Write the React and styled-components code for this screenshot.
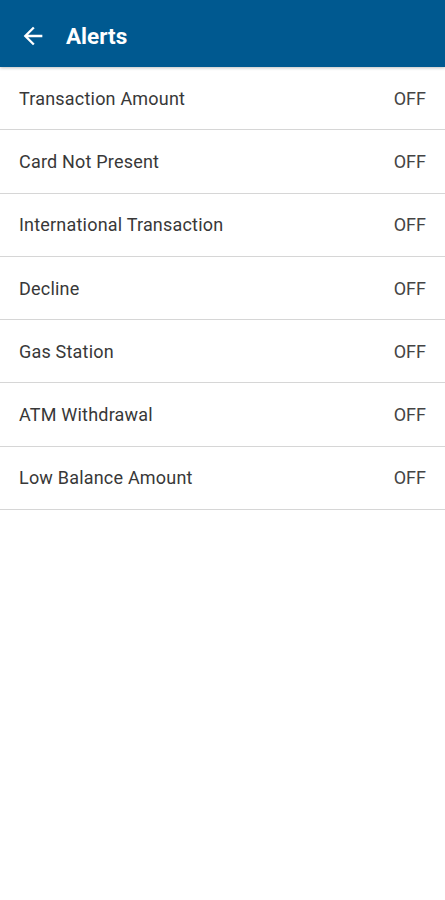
import React from 'react'
import styled, { createGlobalStyle } from 'styled-components'

const GlobalStyle = createGlobalStyle`
  body {
    margin: 0;
    background: #fff;
    font-family: Roboto, "Liberation Sans", sans-serif;
  }
`

const alerts = [
  'Transaction Amount',
  'Card Not Present',
  'International Transaction',
  'Decline',
  'Gas Station',
  'ATM Withdrawal',
  'Low Balance Amount',
]

const App = () => {
  return (
    <Page>
      <GlobalStyle />
      <Toolbar>
        <BackButton aria-label='back'>
          <svg width='28' height='28' viewBox='0 0 24 24'>
            <path d='M20 11H7.83l5.59-5.59L12 4l-8 8 8 8 1.41-1.41L7.83 13H20v-2z' fill='#fff' />
          </svg>
        </BackButton>
        <Title>Alerts</Title>
      </Toolbar>
      <List>
        {alerts.map((name) => (
          <Row key={name}>
            <Label>{name}</Label>
            <Status>OFF</Status>
          </Row>
        ))}
      </List>
    </Page>
  )
}

const Page = styled.div`
  width: 445px;
  min-height: 900px;
  background: #fff;
`

const Toolbar = styled.header`
  height: 67px;
  background: #005990;
  display: flex;
  align-items: center;
  padding: 4px 0 0 19px;
  box-sizing: border-box;
  box-shadow: 0 1px 3px rgba(0, 0, 0, 0.25);
  position: relative;
`

const BackButton = styled.button`
  background: none;
  border: none;
  padding: 0;
  display: flex;
  align-items: center;
  margin-right: 19px;
`

const Title = styled.h1`
  margin: 0;
  color: #fff;
  font-size: 22.5px;
  font-weight: 700;
`

const List = styled.ul`
  list-style: none;
  margin: 0;
  padding: 0;
`

const Row = styled.li`
  display: flex;
  align-items: center;
  justify-content: space-between;
  height: 63.3px;
  padding: 0 19px;
  box-sizing: border-box;
  border-bottom: 1.5px solid #d6d6d6;
`

const Label = styled.span`
  font-size: 18px;
  letter-spacing: 0.2px;
  color: #383838;
`

const Status = styled.span`
  font-size: 18px;
  color: #444;
`

export default App
